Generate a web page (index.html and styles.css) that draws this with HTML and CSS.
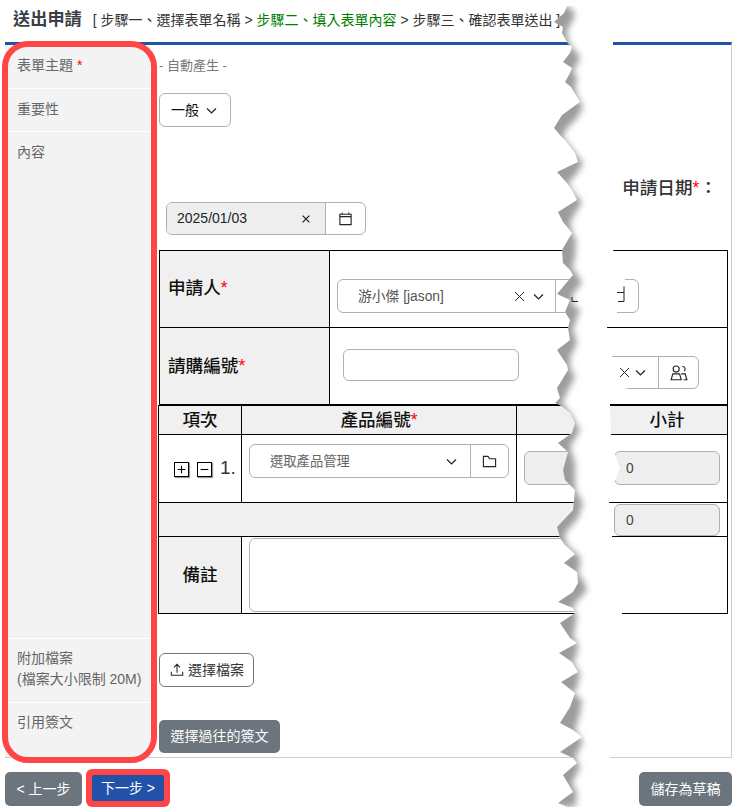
FILE: index.html
```html
<!DOCTYPE html>
<html lang="zh-Hant">
<head>
<meta charset="utf-8">
<title>送出申請</title>
<link rel="stylesheet" href="styles.css">
</head>
<body>
<header class="head">
  <h1 class="title">送出申請</h1>
  <p class="steps">[ 步驟一、選擇表單名稱 &gt; <span class="now">步驟二、填入表單內容</span> &gt; 步驟三、確認表單送出 ]</p>
</header>
<main class="form">
  <div class="row r1">
    <div class="label">表單主題 <span class="req">*</span></div>
    <div class="value auto">- 自動產生 -</div>
  </div>
  <div class="row r2">
    <div class="label">重要性</div>
    <div class="value">
      <div class="ctl sel-small">一般
        <svg class="ico chev" viewBox="0 0 16 16"><path d="M2.5 5.5 8 11l5.5-5.5"/></svg>
      </div>
    </div>
  </div>
  <div class="row r3">
    <div class="label">內容</div>
    <div class="value content">
      <div class="date-label">申請日期<span class="req">*</span>：</div>
      <div class="ctl date">
        <span class="date-val">2025/01/03<svg class="ico x" viewBox="0 0 16 16"><path d="M3.5 3.5l9 9M12.5 3.5l-9 9"/></svg></span>
        <span class="addon"><svg class="ico cal" viewBox="0 0 16 16"><path d="M2 3.5h12v11H2zM2 6h12M4.5 1.5v2M11.5 1.5v2"/></svg></span>
      </div>
      <table class="t1">
        <colgroup><col class="c1a"><col class="c1b"></colgroup>
        <tr>
          <th class="head-cell">申請人<span class="req">*</span></th>
          <td>
            <div class="cell-flex pad1">
              <div class="ctl sel-a">
                <span class="sel-text">游小傑 [jason]</span>
                <svg class="ico x2" viewBox="0 0 16 16"><path d="M2.5 2.5l11 11M13.5 2.5l-11 11"/></svg>
                <svg class="ico chev" viewBox="0 0 16 16"><path d="M2.5 5.5 8 11l5.5-5.5"/></svg>
                <span class="addon addon-a"></span>
              </div>
            </div>
          </td>
        </tr>
        <tr>
          <th class="head-cell">請購編號<span class="req">*</span></th>
          <td>
            <div class="cell-flex pad2">
              <div class="ctl code"></div>
              <div class="ctl sel-b">
                <svg class="ico x2" viewBox="0 0 16 16"><path d="M2.5 2.5l11 11M13.5 2.5l-11 11"/></svg>
                <svg class="ico chev" viewBox="0 0 16 16"><path d="M2.5 5.5 8 11l5.5-5.5"/></svg>
                <span class="addon addon-b"><svg class="ico ppl" viewBox="0 0 16 16"><circle cx="5.5" cy="4.5" r="2.7"/><path d="M11 2a2.6 2.6 0 0 1 1.5 4.6M1 14l1.5-5.2h6L10 14zM10 8.800h3.500L15 14h-3"/></svg></span>
              </div>
            </div>
          </td>
        </tr>
      </table>
      <table class="t2">
        <colgroup><col class="c2a"><col class="c2b"><col class="c2c"><col class="c2d"></colgroup>
        <tr class="tr-h">
          <th class="head-cell center">項次</th>
          <th class="head-cell center">產品編號<span class="req">*</span></th>
          <th class="head-cell"></th>
          <th class="head-cell center">小計</th>
        </tr>
        <tr class="tr-item">
          <td class="no">
            <div class="no-flex">
              <span class="box"><svg viewBox="0 0 12 12"><path d="M6 2.500v7M2.500 6h7"/></svg></span>
              <span class="box"><svg viewBox="0 0 12 12"><path d="M2.500 6h7"/></svg></span>
              <span class="num">1.</span>
            </div>
          </td>
          <td class="top">
            <div class="ctl sel-p">
              <span class="sel-text2">選取產品管理</span>
              <svg class="ico chev" viewBox="0 0 16 16"><path d="M2.500 5.500 8 11l5.500-5.500"/></svg>
              <span class="addon addon-p"><svg class="ico cal" viewBox="0 0 16 16"><path d="M1.500 2.500h5l1.500 2.500h6.500v8.500h-13z"/></svg></span>
            </div>
          </td>
          <td class="top2"><div class="ctl ro"></div></td>
          <td class="top2"><div class="ctl ro">0</div></td>
        </tr>
        <tr class="tr-sum">
          <td colspan="3" class="gray"></td>
          <td class="sumcell"><div class="ctl ro ro-s">0</div></td>
        </tr>
        <tr class="tr-note">
          <th class="head-cell center">備註</th>
          <td colspan="3" class="notecell"><div class="ctl note"></div></td>
        </tr>
      </table>
    </div>
  </div>
  <div class="row r4">
    <div class="label">附加檔案<br>(檔案大小限制 20M)</div>
    <div class="value">
      <div class="ctl upload">
        <svg class="ico up" viewBox="0 0 16 16"><path d="M1.500 10v4h13v-4M8 11V2M4.500 5 8 1.500 11.500 5"/></svg>選擇檔案
      </div>
    </div>
  </div>
  <div class="row r5">
    <div class="label">引用簽文</div>
    <div class="value"><button class="btn sig">選擇過往的簽文</button></div>
  </div>
</main>
<footer class="foot">
  <div class="foot-left">
    <button class="btn prev">&lt; 上一步</button>
    <button class="btn next">下一步 &gt;</button>
  </div>
  <button class="btn save">儲存為草稿</button>
</footer>
<div class="ring"></div>
<svg class="tear" viewBox="0 0 735 812" aria-hidden="true">
  <defs>
    <filter id="soft" filterUnits="userSpaceOnUse" x="500" y="0" width="135" height="812"><feGaussianBlur stdDeviation="3"/></filter>
    <clipPath id="cut"><polygon points="567,6 564,13 554,22 563,27 562,33 567,42 572,47 570,53 563,62 572,68 570,73 565,82 571,87 577,97 580,102 562,115 554,128 560,135 565,140 575,153 578,162 557,172 567,183 572,190 577,200 558,212 563,222 572,233 562,250 563,263 570,270 573,275 557,294 570,300 565,312 570,320 568,328 570,340 557,350 567,365 568,370 557,388 560,398 555,403 560,405 570,413 575,423 572,433 558,443 568,452 563,470 565,480 575,490 573,510 557,527 560,538 565,545 575,554 564,563 577,572 578,583 573,592 558,602 573,608 575,613 560,623 570,638 577,643 559,653 572,662 578,672 561,682 575,693 570,707 560,723 573,730 582,737 560,752 573,758 577,763 563,775 573,792 558,803 567,807 640,807 640,6"/></clipPath>
  </defs>
  <polygon class="band" points="567,0 567,6 564,13 554,22 563,27 562,33 567,42 572,47 570,53 563,62 572,68 570,73 565,82 571,87 577,97 580,102 562,115 554,128 560,135 565,140 575,153 578,162 557,172 567,183 572,190 577,200 558,212 563,222 572,233 562,250 563,263 570,270 573,275 557,294 570,300 565,312 570,320 568,328 570,340 557,350 567,365 568,370 557,388 560,398 555,403 560,405 570,413 575,423 572,433 558,443 568,452 563,470 565,480 575,490 573,510 557,527 560,538 565,545 575,554 564,563 577,572 578,583 573,592 558,602 573,608 575,613 560,623 570,638 577,643 559,653 572,662 578,672 561,682 575,693 570,707 560,723 573,730 582,737 560,752 573,758 577,763 563,775 573,792 558,803 567,812 613,812 613,770 610,757 622,620 622,613 612,536 609,502 613,485 620,468 614,452 611,436 610,404 612,395 628,388 615,370 612,356 607,327 617,315 617,305 620,290 625,279 613,250 613,0"/>
  <g clip-path="url(#cut)">
    <polygon class="shade" filter="url(#soft)" points="568,6 575,13 573,20 567,30 568,40 572,47 580,57 578,63 573,70 577,78 575,88 578,98 583,107 577,118 567,128 563,135 565,140 575,153 583,163 577,173 568,183 573,192 582,202 577,210 570,222 572,233 576,240 575,257 572,268 577,274 582,283 573,293 572,300 573,305 580,310 575,323 573,330 577,343 570,357 570,367 575,377 568,390 562,403 570,413 580,430 570,447 575,463 575,487 577,493 583,503 578,518 565,533 565,540 567,545 580,557 580,567 577,572 583,580 587,590 578,600 572,608 577,615 575,627 573,638 578,643 577,653 573,662 580,673 577,687 573,693 582,700 580,713 575,730 583,742 575,757 580,767 572,783 577,793 575,807 500,807 500,6"/>
  </g>
  <path class="frag" d="M572 297v4.500h6M618 301.500h6v-15M617 292.500h7"/>
</svg>
</body>
</html>
```

FILE: styles.css
```css
* { box-sizing: border-box; }
html, body { margin: 0; padding: 0; }
body {
  position: relative;
  width: 735px;
  height: 812px;
  overflow: hidden;
  background: #fff;
  color: #212529;
  font-family: "Liberation Sans", "Noto Sans CJK TC", sans-serif;
  font-size: 14px;
  line-height: 21px;
}

.head {
  display: flex;
  align-items: center;
  gap: 11px;
  height: 42px;
  padding: 0 0 4px 13px;
}
.title { margin: 0; font-size: 17.200px; font-weight: 700; color: #3a3f45; }
.steps { margin: 3px 0 0; font-size: 14px; white-space: nowrap; color: #333; }
.now { color: #008000; }

.form {
  width: 727px;
  height: 716px;
  margin-left: 5px;
  border-top: 3px solid #2251a8;
  border-right: 1px solid #ccc;
  border-bottom: 1px solid #ccc;
}
.row { display: flex; }
.label {
  flex: 0 0 145px;
  padding: 10px 0 0 12px;
  background: #f3f3f3;
  border-bottom: 1px solid #fff;
  color: #666;
}
.value { flex: 1; min-width: 0; padding-left: 9px; }
.r1 { height: 44px; }
.r2 { height: 43px; }
.r3 { height: 507px; }
.r4 { height: 64px; }
.r5 { height: 54px; }
.r4 .label { padding-top: 9px; }
.r5 .label { padding-top: 9px; border-bottom: 0; }
.r1 .value { padding-top: 10px; }
.r2 .value { padding-top: 4px; }
.r4 .value { padding-top: 14px; }
.r5 .value { padding-top: 17px; }
.auto { color: #777; font-size: 13px; }
.req { color: #f00; }

.ctl {
  display: flex;
  align-items: center;
  border: 1px solid #b0b0b0;
  border-radius: 6px;
  background: #fff;
  color: #212529;
}
.ico {
  display: block;
  fill: none;
  stroke: #212529;
  stroke-width: 1.200;
  flex: none;
}
.chev { width: 13px; height: 13px; stroke-width: 1.600; }
.sel-small { width: 72px; height: 34px; padding-left: 11px; gap: 6px; color: #111; }

.date-label {
  padding: 44px 14px 0 0;
  height: 70px;
  text-align: right;
  font-size: 17.600px;
  font-weight: 500;
  line-height: 24px;
  color: #333;
}
.date { width: 200px; height: 33px; margin-left: 7px; overflow: hidden; }
.date-val {
  display: flex;
  align-items: center;
  justify-content: space-between;
  width: 159px;
  height: 100%;
  padding: 0 13px 0 10px;
  background: #eee;
  font-size: 14px;
  border-right: 1px solid #b0b0b0;
}
.x { width: 12px; height: 12px; stroke-width: 1.700; }
.addon { display: flex; align-items: center; justify-content: center; height: 100%; flex: 1; }
.cal { width: 15px; height: 15px; }

.t1, .t2 { border-collapse: collapse; table-layout: fixed; }
.t1 { width: 568px; margin-top: 15px; }
.t2 { width: 569px; margin-left: -1px; }
.t1 td, .t1 th, .t2 td, .t2 th { border: 1px solid #000; padding: 0; }
.c1a { width: 170px; } .c1b { width: 398px; }
.c2a { width: 83px; } .c2b { width: 275px; } .c2c { width: 90px; } .c2d { width: 121px; }
.t1 tr { height: 77px; }
.head-cell {
  background: #f0f0f0;
  font-size: 17.600px;
  font-weight: 500;
  line-height: 24px;
  text-align: left;
  color: #111;
}
.t1 .head-cell { padding: 0 0 2px 8px; }
.t1 tr + tr .head-cell { padding-bottom: 0; }
.center { text-align: center; }
.t1 td { vertical-align: top; }
.cell-flex { display: flex; align-items: flex-start; }
.pad1 { padding: 28px 0 0 7px; }
.pad2 { padding: 21px 0 0 13px; }
.sel-a { width: 302px; height: 34px; padding-left: 20px; }
.sel-text { width: 155px; font-size: 13.800px; color: #555; }
.x2 { width: 13px; height: 13px; }
.sel-a .chev { margin-left: 6px; }
.addon-a { height: 100%; margin-left: 10px; border-left: 1px solid #b0b0b0; }
.code { width: 176px; height: 32px; }
.sel-b {
  width: 99px;
  height: 33px;
  margin: 7px 0 0 81px;
  padding-left: 17px;
  justify-content: flex-start;
}
.sel-b .chev { margin-left: 3px; }
.addon-b { margin-left: 11px; border-left: 1px solid #b0b0b0; }
.ppl { width: 18px; height: 18px; stroke-width: 1; }

.tr-h { height: 29px; }
.tr-item { height: 68px; }
.tr-sum { height: 34px; }
.tr-note { height: 77px; }
.t2 .no { vertical-align: top; }
.no-flex { display: flex; align-items: flex-start; padding: 22px 0 0 15px; }
.box {
  display: block;
  flex: none;
  width: 15px;
  height: 15px;
  margin: 5px 8px 0 0;
  border: 1px solid #000;
  background: #fff;
  box-shadow: 1px 1px 1px #999;
}
.box svg { display: block; fill: none; stroke: #000; stroke-width: 1; }
.num { font-size: 19px; font-weight: 500; color: #333; }
.t2 .top { vertical-align: top; padding: 9px 7px 0; }
.t2 .top2 { vertical-align: top; padding: 16px 7px 0; }
.sel-p { height: 34px; padding-left: 20px; }
.sel-text2 { width: 175px; font-size: 13.300px; color: #666; }
.addon-p { height: 100%; margin-left: 12px; border-left: 1px solid #b0b0b0; }
.ro { height: 34px; padding-left: 11px; background: #eee; font-size: 13.800px; color: #444; }
.gray { background: #f0f0f0; }
.t2 .sumcell { padding: 0 7px; }
.ro-s { height: 32px; padding-top: 2px; }
.t2 .notecell { padding: 1px 7px 0; vertical-align: top; }
.note { width: 340px; height: 74px; }
.upload { width: 95px; height: 34px; padding-left: 10px; gap: 4px; border-color: #777; color: #333; }
.up { width: 14px; height: 14px; }

.btn {
  display: block;
  border: 0;
  border-radius: 5px;
  padding: 0;
  background: #6c757d;
  color: #fff;
  font-family: inherit;
  font-size: 14px;
  line-height: 21px;
}
.sig { width: 121px; height: 33px; }
.foot {
  display: flex;
  justify-content: space-between;
  align-items: flex-start;
  width: 727px;
  height: 34px;
  margin: 14px 0 0 5px;
}
.foot-left { display: flex; align-items: flex-start; gap: 10px; }
.prev { width: 77px; height: 34px; }
.next {
  width: 72px;
  height: 26px;
  margin-top: 3px;
  border-radius: 2px;
  background: #2251a8;
  box-shadow: 0 0 0 6px #ff4545;
}
.save { width: 93px; height: 34px; }

.ring {
  position: absolute;
  left: 2px;
  top: 41px;
  width: 155px;
  height: 722px;
  border: 6px solid #ff4545;
  border-radius: 26px;
}
.tear { position: absolute; left: 0; top: 0; width: 735px; height: 812px; pointer-events: none; }
.band { fill: #fff; }
.shade { fill: #9c9c9c; }
.frag { fill: none; stroke: #212529; stroke-width: 1; }
```
